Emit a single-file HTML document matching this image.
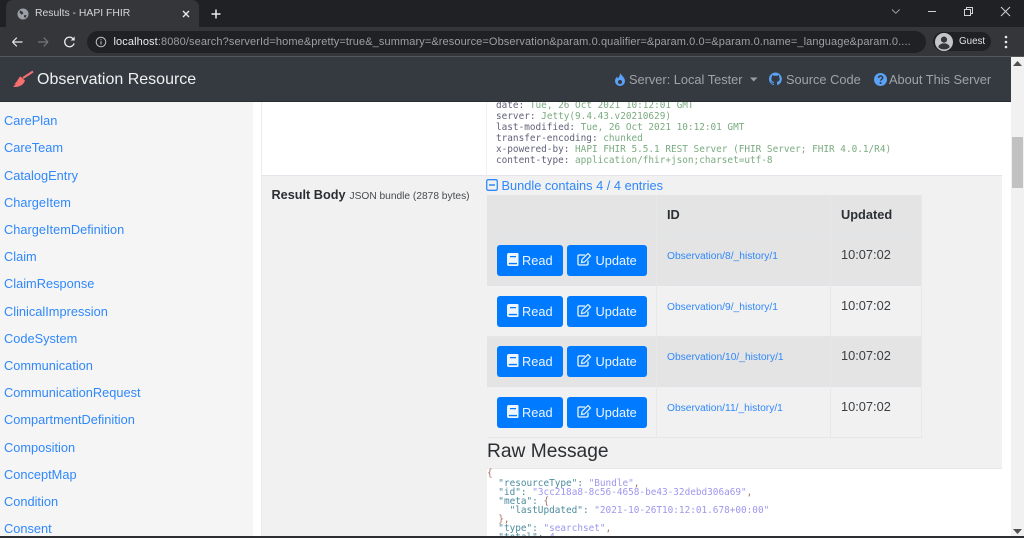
<!DOCTYPE html>
<html><head><meta charset="utf-8"><title>Results - HAPI FHIR</title>
<style>
*{box-sizing:border-box}
html,body{margin:0;padding:0;width:1024px;height:538px;overflow:hidden;background:#fff;font-family:"Liberation Sans",sans-serif}
#w{position:absolute;left:0;top:0;width:1024px;height:538px;overflow:hidden;filter:blur(.3px)}
.a{position:absolute}
.t{position:absolute;white-space:nowrap;line-height:1}
.s{position:absolute;left:4px;font-size:12.8px;color:#3088fb;white-space:nowrap;line-height:14px}
.m{position:absolute;font-family:"DejaVu Sans Mono",monospace;font-size:9.4px;white-space:pre;line-height:11px}
.btn{position:absolute;height:31px;background:#007bff;border-radius:3px;color:#eef5ff;font-size:12.8px}
.btn span{position:absolute;top:7.5px;line-height:15px}
.btn svg{position:absolute;top:8px}
.k{color:#62627a}.g{color:#7bab80}.b{color:#9d97ee}.j{color:#4c8c9e}
</style></head><body><div id="w">

<!-- chrome -->
<div class="a" style="left:0;top:0;width:1024px;height:27px;background:#202124"></div>
<div class="a" style="left:6px;top:0;width:193px;height:27px;background:#35363a;border-radius:7px 7px 0 0"></div>
<svg class="a" style="left:17px;top:8px" width="12" height="12" viewBox="0 0 13 13"><circle cx="6.5" cy="6.5" r="6" fill="#9aa0a6"/><path d="M3 2.500l3 1.500 1 2-2 1-2-1.500zM8 7.500l2.500.5-1.500 3-1.500-1.500z" fill="#35363a"/></svg>
<div class="t" style="left:35px;top:8px;font-size:10.400px;line-height:12px;color:#d4d6d9">Results - HAPI FHIR</div>
<svg class="a" style="left:182px;top:10px" width="8" height="8" viewBox="0 0 8 8"><path d="M1 1l6 6M7 1l-6 6" stroke="#e8eaed" stroke-width="1.400"/></svg>
<svg class="a" style="left:210px;top:8px" width="12" height="12" viewBox="0 0 12 12"><path d="M6 1.500v9M1.500 6h9" stroke="#e8eaed" stroke-width="1.500"/></svg>
<svg class="a" style="left:891px;top:0" width="130" height="20" viewBox="0 0 130 20"><path d="M1 9.500l3.800 3.800 3.800-3.800" stroke="#a8abaf" fill="none" stroke-width=".9"/><path d="M37 11.500h8" stroke="#d0d2d4" stroke-width="1"/><path d="M73.500 9.500h6v6h-6zM75.500 9.500v-2h6v6h-2" stroke="#d0d2d4" fill="none" stroke-width="1"/><path d="M110 7l9 9M119 7l-9 9" stroke="#d0d2d4" stroke-width="1"/></svg>

<div class="a" style="left:0;top:27px;width:1024px;height:29px;background:#35363a"></div>
<div class="a" style="left:0;top:56px;width:1024px;height:1px;background:#55575b"></div>
<svg class="a" style="left:11px;top:35px" width="70" height="14" viewBox="0 0 70 14"><path d="M1.500 7h10M1.500 7l4.300-4.300M1.500 7l4.300 4.300" stroke="#e8eaed" fill="none" stroke-width="1.200"/><path d="M27 7h10M37 7l-4.300-4.300M37 7l-4.300 4.300" stroke="#75777b" fill="none" stroke-width="1.200"/><path d="M62.800 3.600a4.800 4.800 0 1 0 1.100 4.800" stroke="#e8eaed" fill="none" stroke-width="1.300" transform="translate(-.8 0)"/><path d="M63.700 1.500v4h-4z" fill="#e8eaed"/></svg>
<div class="a" style="left:87px;top:31px;width:839px;height:22px;background:#202124;border-radius:11px"></div>
<svg class="a" style="left:95px;top:36px" width="12" height="12" viewBox="0 0 12 12"><circle cx="6" cy="6" r="4.800" stroke="#bdc1c6" fill="none"/><path d="M6 5.300v3.200M6 3.300v1" stroke="#bdc1c6"/></svg>
<div class="t" style="left:113.500px;top:35px;font-size:11px;line-height:14px;letter-spacing:.1px;color:#9aa0a6;width:805px;overflow:hidden"><span style="color:#e8eaed">localhost</span>:8080/search?serverId=home&amp;pretty=true&amp;_summary=&amp;resource=Observation&amp;param.0.qualifier=&amp;param.0.0=&amp;param.0.name=_language&amp;param.0....</div>
<div class="a" style="left:933px;top:32px;width:58px;height:19px;background:#202124;border-radius:10px"></div>
<svg class="a" style="left:935px;top:33px" width="18" height="18" viewBox="0 0 17 17"><circle cx="8.500" cy="8.500" r="8.500" fill="#c4c7ca"/><circle cx="8.500" cy="6.200" r="2.900" fill="#35363a"/><path d="M3 13.200c1-2.700 3.300-3.400 5.500-3.400s4.500.7 5.500 3.400c-1.500 1.600-3.400 2.300-5.500 2.300s-4-.7-5.500-2.300z" fill="#35363a"/></svg>
<div class="t" style="left:959px;top:35px;font-size:9.800px;line-height:13px;color:#dfe1e4">Guest</div>
<svg class="a" style="left:1004px;top:35px" width="4" height="14" viewBox="0 0 4 14"><circle cx="2" cy="2" r="1.300" fill="#e8eaed"/><circle cx="2" cy="7" r="1.300" fill="#e8eaed"/><circle cx="2" cy="12" r="1.300" fill="#e8eaed"/></svg>

<!-- page backdrops -->
<div class="a" style="left:0;top:101px;width:253px;height:437px;background:#f5f5f5"></div>
<div class="a" style="left:261px;top:101px;width:741px;height:437px;background:#f1f1f1;border-left:1px solid #e8ebee"></div>
<div class="a" style="left:262px;top:101px;width:740px;height:75px;background:#fff;border-bottom:1px solid #e2e6ea"></div>
<div class="a" style="left:486px;top:101px;width:1px;height:75px;background:#eef0f2"></div>

<!-- navbar -->
<div class="a" style="left:0;top:57px;width:1011px;height:45px;background:#343a40;border-bottom:1px solid #2a2e33"></div>
<svg class="a" style="left:12px;top:70px" width="22" height="18" viewBox="0 0 22 18"><path d="M21 1.500L11 8" stroke="#f96f6f" stroke-width="2"/><path d="M8.500 6.500l4.500 4c-1 3-3.500 6-9.500 6.500H1l3-3-2.500.5c3-1.500 4.500-5.500 6.500-8z" fill="#f96f6f"/></svg>
<div class="t" style="left:37px;top:71px;font-size:16px;line-height:18px;color:#eef0f1">Observation Resource</div>
<svg class="a" style="left:615px;top:73px" width="10" height="13" viewBox="0 0 10 13"><path d="M5.500 0c.5 2.500 4.500 4.300 4.500 8a5 5 0 0 1-10 0c0-2 1-3.300 2-4.300l1 1.800C4 4 5 2 5.500 0z" fill="#5aa2f8"/><circle cx="5" cy="9" r="2" fill="#343a40"/></svg>
<div class="t" style="left:629px;top:72px;font-size:12.800px;line-height:15px;color:#a0a3a7">Server: Local Tester</div>
<svg class="a" style="left:750px;top:77px" width="8" height="5" viewBox="0 0 8 5"><path d="M0 .500h7.500L3.700 4.500z" fill="#9a9da1"/></svg>
<svg class="a" style="left:769px;top:72px" width="13" height="14" viewBox="0 0 16 16"><path d="M8 0a8 8 0 0 0-2.500 15.600c.4.100.5-.2.500-.4v-1.400c-2.200.5-2.700-1-2.700-1-.4-.9-.9-1.200-.9-1.200-.7-.5.100-.5.100-.5.800.100 1.200.8 1.200.8.700 1.200 1.900.9 2.300.7.100-.5.300-.9.500-1.100-1.800-.2-3.600-.9-3.600-4 0-.9.300-1.600.8-2.100-.1-.2-.4-1 .1-2.100 0 0 .7-.2 2.200.8a7.500 7.500 0 0 1 4 0c1.500-1 2.200-.8 2.200-.8.400 1.100.2 1.900.1 2.100.5.600.8 1.300.8 2.100 0 3.100-1.900 3.700-3.700 3.900.3.300.6.700.6 1.500v2.200c0 .2.100.5.600.4A8 8 0 0 0 8 0z" fill="#5aa2f8"/></svg>
<div class="t" style="left:786px;top:72px;font-size:12.800px;line-height:15px;color:#a0a3a7">Source Code</div>
<svg class="a" style="left:874px;top:73px" width="13" height="13" viewBox="0 0 13 13"><circle cx="6.500" cy="6.500" r="6.500" fill="#5aa2f8"/><path d="M4.500 5c0-1.300 1-2 2.100-2 1.200 0 2.100.8 2.100 1.800 0 1.500-2.100 1.500-2.100 2.900" stroke="#343a40" stroke-width="1.500" fill="none"/><circle cx="6.500" cy="10" r="1" fill="#343a40"/></svg>
<div class="t" style="left:889px;top:72px;font-size:12.800px;line-height:15px;color:#a0a3a7">About This Server</div>

<!-- sidebar -->
<div class="s" style="top:114px">CarePlan</div>
<div class="s" style="top:141px">CareTeam</div>
<div class="s" style="top:168.500px">CatalogEntry</div>
<div class="s" style="top:196px">ChargeItem</div>
<div class="s" style="top:223px">ChargeItemDefinition</div>
<div class="s" style="top:250px">Claim</div>
<div class="s" style="top:277px">ClaimResponse</div>
<div class="s" style="top:304.500px">ClinicalImpression</div>
<div class="s" style="top:332px">CodeSystem</div>
<div class="s" style="top:359px">Communication</div>
<div class="s" style="top:386px">CommunicationRequest</div>
<div class="s" style="top:413px">CompartmentDefinition</div>
<div class="s" style="top:440.500px">Composition</div>
<div class="s" style="top:467.500px">ConceptMap</div>
<div class="s" style="top:495px">Condition</div>
<div class="s" style="top:522px">Consent</div>

<!-- headers -->
<div class="m" style="left:496px;top:100px;clip-path:inset(2px 0 0 0)"><span class="k">date:</span> <span class="g">Tue, 26 Oct 2021 10:12:01 GMT</span></div>
<div class="m" style="left:496px;top:111px"><span class="k">server:</span> <span class="g">Jetty(9.4.43.v20210629)</span></div>
<div class="m" style="left:496px;top:122px"><span class="k">last-modified:</span> <span class="g">Tue, 26 Oct 2021 10:12:01 GMT</span></div>
<div class="m" style="left:496px;top:133px"><span class="k">transfer-encoding:</span> <span class="g">chunked</span></div>
<div class="m" style="left:496px;top:144px"><span class="k">x-powered-by:</span> <span class="g">HAPI FHIR 5.5.1 REST Server (FHIR Server; FHIR 4.0.1/R4)</span></div>
<div class="m" style="left:496px;top:155px"><span class="k">content-type:</span> <span class="g">application/fhir+json;charset=utf-8</span></div>

<!-- result body -->
<div class="t" style="left:271.500px;top:188px;font-size:12.700px;line-height:15px;font-weight:bold;color:#2b2f33">Result Body</div>
<div class="t" style="left:349.500px;top:190.500px;font-size:10.200px;line-height:12px;color:#464b50">JSON bundle (2878 bytes)</div>
<svg class="a" style="left:486px;top:179px" width="12" height="12" viewBox="0 0 12 12"><rect x=".7" y=".7" width="10.600" height="10.600" rx="1.500" fill="none" stroke="#3088fb" stroke-width="1.300"/><path d="M3 6h6" stroke="#3088fb" stroke-width="1.500"/></svg>
<div class="t" style="left:501.500px;top:178px;font-size:12.800px;line-height:15px;color:#3088fb">Bundle contains 4 / 4 entries</div>

<!-- table -->
<div class="a" style="left:487px;top:195px;width:435px;height:40px;background:#e4e4e4;border-bottom:1px solid #dfe4e8"></div>
<div class="a" style="left:487px;top:235px;width:435px;height:51px;background:#e4e4e4;border-bottom:1px solid #e0e4e8"></div>
<div class="a" style="left:487px;top:286px;width:435px;height:51px;background:#f1f1f1;border-bottom:1px solid #e4e7ea"></div>
<div class="a" style="left:487px;top:337px;width:435px;height:50px;background:#e4e4e4;border-bottom:1px solid #e0e4e8"></div>
<div class="a" style="left:487px;top:387px;width:435px;height:51px;background:#f1f1f1;border-bottom:1px solid #e4e7ea"></div>
<div class="a" style="left:656px;top:195px;width:1px;height:243px;background:#e6e8ea"></div>
<div class="a" style="left:830px;top:195px;width:1px;height:243px;background:#e6e8ea"></div>
<div class="a" style="left:921px;top:195px;width:1px;height:243px;background:#e6e8ea"></div>
<div class="t" style="left:667px;top:207px;font-size:12.800px;line-height:15px;font-weight:bold;color:#2b2f33">ID</div>
<div class="t" style="left:841px;top:207px;font-size:12.800px;line-height:15px;font-weight:bold;color:#2b2f33">Updated</div>

<svg width="0" height="0" style="position:absolute"><defs>
<symbol id="bk" viewBox="0 0 12 13"><path d="M2 0h8.500a1 1 0 0 1 1 1v11a1 1 0 0 1-1 1H2a2 2 0 0 1-2-2V2a2 2 0 0 1 2-2z" fill="#eef5ff"/><path d="M1.800 9.900h8.200v1.300H1.800zM3 3h6v1.200H3z" fill="#007bff"/></symbol>
<symbol id="ed" viewBox="0 0 15 13"><path d="M11 7.500v3.300a1.200 1.200 0 0 1-1.200 1.200H2.200A1.200 1.200 0 0 1 1 10.800V3.200A1.200 1.200 0 0 1 2.200 2H8" fill="none" stroke="#eef5ff" stroke-width="1.300"/><path d="M5 6.500l6-6 2.500 2.500-6 6-3 .5z" fill="none" stroke="#eef5ff" stroke-width="1.200"/></symbol>
</defs></svg>

<div class="btn" style="left:497px;top:245px;width:66px"><svg style="left:10px" width="12" height="13"><use href="#bk"/></svg><span style="left:25px">Read</span></div>
<div class="btn" style="left:567px;top:245px;width:80px"><svg style="left:10px" width="15" height="13"><use href="#ed"/></svg><span style="left:28.500px">Update</span></div>
<div class="btn" style="left:497px;top:296px;width:66px"><svg style="left:10px" width="12" height="13"><use href="#bk"/></svg><span style="left:25px">Read</span></div>
<div class="btn" style="left:567px;top:296px;width:80px"><svg style="left:10px" width="15" height="13"><use href="#ed"/></svg><span style="left:28.500px">Update</span></div>
<div class="btn" style="left:497px;top:346px;width:66px"><svg style="left:10px" width="12" height="13"><use href="#bk"/></svg><span style="left:25px">Read</span></div>
<div class="btn" style="left:567px;top:346px;width:80px"><svg style="left:10px" width="15" height="13"><use href="#ed"/></svg><span style="left:28.500px">Update</span></div>
<div class="btn" style="left:497px;top:397px;width:66px"><svg style="left:10px" width="12" height="13"><use href="#bk"/></svg><span style="left:25px">Read</span></div>
<div class="btn" style="left:567px;top:397px;width:80px"><svg style="left:10px" width="15" height="13"><use href="#ed"/></svg><span style="left:28.500px">Update</span></div>

<div class="t" style="left:667px;top:250px;font-size:10.240px;line-height:13px;color:#3088fb">Observation/8/_history/1</div>
<div class="t" style="left:667px;top:301px;font-size:10.240px;line-height:13px;color:#3088fb">Observation/9/_history/1</div>
<div class="t" style="left:667px;top:351px;font-size:10.240px;line-height:13px;color:#3088fb">Observation/10/_history/1</div>
<div class="t" style="left:667px;top:402px;font-size:10.240px;line-height:13px;color:#3088fb">Observation/11/_history/1</div>
<div class="t" style="left:841px;top:247px;font-size:12.800px;line-height:15px;color:#3a3e42">10:07:02</div>
<div class="t" style="left:841px;top:298px;font-size:12.800px;line-height:15px;color:#3a3e42">10:07:02</div>
<div class="t" style="left:841px;top:348px;font-size:12.800px;line-height:15px;color:#3a3e42">10:07:02</div>
<div class="t" style="left:841px;top:399px;font-size:12.800px;line-height:15px;color:#3a3e42">10:07:02</div>

<!-- raw -->
<div class="t" style="left:487px;top:440.500px;font-size:19.200px;line-height:22px;color:#2b2f33">Raw Message</div>
<div class="a" style="left:487px;top:468px;width:515px;height:70px;background:#fff;border-top:1px solid #e8e8e8"></div>
<div class="m" style="left:487px;top:468px;color:#a5705f">{</div>
<div class="m" style="left:487px;top:477.500px">  <span class="j">"resourceType":</span> <span class="b">"Bundle"</span><span style="color:#a5705f">,</span></div>
<div class="m" style="left:487px;top:486.500px">  <span class="j">"id":</span> <span class="b">"3cc218a8-8c56-4658-be43-32debd306a69"</span><span style="color:#a5705f">,</span></div>
<div class="m" style="left:487px;top:495.500px">  <span class="j">"meta":</span> <span style="color:#a5705f">{</span></div>
<div class="m" style="left:487px;top:504.500px">    <span class="j">"lastUpdated":</span> <span class="b">"2021-10-26T10:12:01.678+00:00"</span></div>
<div class="m" style="left:487px;top:513.500px;color:#a5705f">  },</div>
<div class="m" style="left:487px;top:522.500px">  <span class="j">"type":</span> <span class="b">"searchset"</span><span style="color:#a5705f">,</span></div>
<div class="m" style="left:487px;top:531.500px">  <span class="j">"total":</span> <span class="b">4</span><span style="color:#a5705f">,</span></div>

<!-- scrollbar -->
<div class="a" style="left:1011px;top:57px;width:13px;height:481px;background:#f1f1f1"></div>
<div class="a" style="left:1012px;top:137px;width:11px;height:51px;background:#c1c1c1"></div>
<svg class="a" style="left:1013px;top:61px" width="9" height="5" viewBox="0 0 9 5"><path d="M4.500 0L9 5H0z" fill="#505050"/></svg>
<svg class="a" style="left:1013px;top:529px" width="9" height="5" viewBox="0 0 9 5"><path d="M0 0h9L4.500 5z" fill="#505050"/></svg>
<div class="a" style="left:0;top:536px;width:1024px;height:2px;background:#2c2e31"></div>
</div></body></html>
